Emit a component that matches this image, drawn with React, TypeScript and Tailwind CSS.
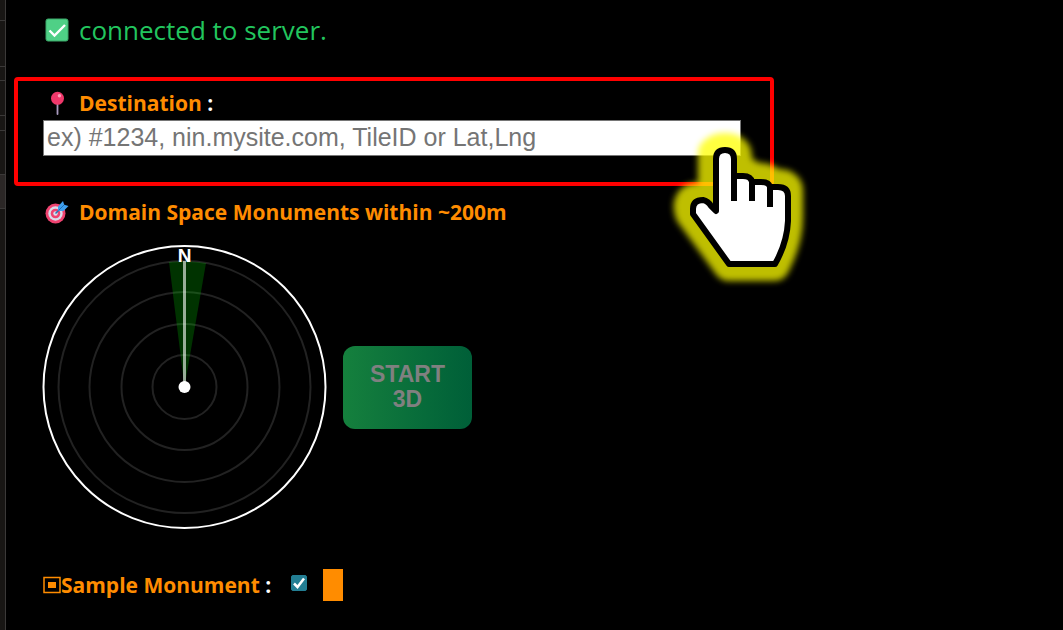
import { useState } from "react";

const railSections = [
  { height: "h-[21px]", tone: "bg-[#181614]" },
  { height: "h-[46px]", tone: "bg-[#181614]" },
  { height: "h-[14px]", tone: "bg-[#181614]" },
  { height: "h-[35px]", tone: "bg-[#181614]" },
  { height: "h-[15px]", tone: "bg-[#181614]" },
  { height: "h-[44px]", tone: "bg-[#181614]" },
  { height: "h-[34px]", tone: "bg-[#2b2726]" },
];

const ringRadii = [32, 63, 95, 126];

function CheckIcon() {
  return (
    <svg viewBox="0 0 24 24" className="size-6 shrink-0" aria-hidden="true">
      <rect x="1" y="1" width="22" height="22" rx="2" fill="#4fd086" stroke="#3aa869" />
      <path d="M4.5 12.5l5 5L20 7" fill="none" stroke="#fff" strokeWidth="2.4" />
    </svg>
  );
}

function PinIcon() {
  return (
    <svg viewBox="0 0 24 24" className="size-6 shrink-0" aria-hidden="true">
      <path d="M12.5 12v11" stroke="#a99abf" strokeWidth="1.8" strokeLinecap="round" />
      <circle cx="12.5" cy="7.3" r="6.5" fill="#f0386b" />
      <circle cx="14.4" cy="4.8" r="1.7" fill="#ff9dbb" />
    </svg>
  );
}

function TargetIcon() {
  return (
    <svg viewBox="0 0 24 24" className="size-6 shrink-0" aria-hidden="true">
      <circle cx="10.5" cy="13.5" r="10" fill="#ef4370" />
      <circle cx="10.5" cy="13.5" r="7.2" fill="#d9dcea" />
      <circle cx="10.5" cy="13.5" r="4.8" fill="#ef4370" />
      <circle cx="10.5" cy="13.5" r="2.2" fill="#d9dcea" />
      <path d="M10.5 13.5l7-7" stroke="#2277b8" strokeWidth="1.5" />
      <path d="M13 11V6.5L18 1l1.2 3.8L23.5 6 18.5 11z" fill="#3f9fee" />
      <path d="M13.5 10.5L19 5" stroke="#1d6fb5" strokeWidth="1" />
    </svg>
  );
}

function HandPointer() {
  const outline =
    "M54 83V146L52 139Q44 129 35 129Q27 132 31 143L69 195H114Q127 170 127 147V121Q127 115 118 115H111Q109 110 101 109H92Q90 104 83 104H76V87Q76 79 65 79Q54 79 54 87Z";
  return (
    <svg
      viewBox="0 50 160 170"
      className="pointer-events-none absolute -right-[50px] -bottom-[108px] z-10 h-[170px] w-[160px]"
      aria-hidden="true"
    >
      <defs>
        <filter id="halo" x="-30%" y="-30%" width="160%" height="160%">
          <feGaussianBlur stdDeviation="3" />
        </filter>
      </defs>
      <path
        d={outline}
        fill="#ff0"
        stroke="#ff0"
        strokeWidth="32"
        strokeLinejoin="round"
        opacity="0.75"
        filter="url(#halo)"
      />
      <path
        d="M56 89Q56 80 65 80Q74 80 74 89V106H83Q91 106 92 112H101Q109 112 110 117H118Q128 117 128 126V151Q127 173 115 194H69L33 144V139Q33 130 43 130Q48 131 51 136L56 141Z"
        fill="#fff"
        stroke="#000"
        strokeWidth="6"
        strokeLinejoin="round"
      />
      <path d="M74 104V131M92 112V131M110 117V137" stroke="#000" strokeWidth="6" />
    </svg>
  );
}

function Radar() {
  return (
    <svg
      viewBox="0 0 284 284"
      className="size-[284px] shrink-0 overflow-visible"
      role="img"
      aria-label="Radar facing north"
    >
      {ringRadii.map((r) => (
        <circle key={r} cx="141.5" cy="142" r={r} fill="none" stroke="#222" strokeWidth="2" />
      ))}
      <path d="M141.5 142L126 17Q144 15 163 18Z" fill="#00ff00" opacity="0.2" />
      <path d="M141.5 142V16" stroke="#fff" strokeWidth="3" opacity="0.6" />
      <circle cx="141.5" cy="142" r="141" fill="none" stroke="#fff" strokeWidth="2" />
      <circle cx="141.5" cy="142" r="6" fill="#fff" />
      <text
        x="141.5"
        y="17"
        textAnchor="middle"
        className="fill-white font-['Liberation_Sans',sans-serif] text-[19px] font-bold"
      >
        N
      </text>
    </svg>
  );
}

export default function App() {
  const [destination, setDestination] = useState("");
  const [showSample, setShowSample] = useState(true);

  return (
    <div className="flex min-h-screen bg-black font-['Open_Sans','Noto_Sans',sans-serif] text-white">
      <aside className="w-[6px] shrink-0 border-r border-[#3b3938] bg-[#181614]">
        {railSections.map((section, index) => (
          <div key={index} className={`${section.height} ${section.tone} border-b border-[#3b3938]`} />
        ))}
      </aside>

      <main className="min-w-0 flex-1 px-2 pt-3">
        <p className="flex items-center gap-2.5 pl-[31px] text-[26px] leading-9 text-[#22c55e]">
          <CheckIcon />
          connected to server.
        </p>

        <section className="relative mt-[29px] h-[109px] w-full max-w-[760px] rounded-sm border-4 border-[#f00] pt-2 pr-[29px] pl-[25px]">
          <label
            htmlFor="destination"
            className="mb-[3px] flex items-center gap-2.5 pl-0.5 text-[21px] leading-7 font-bold"
          >
            <PinIcon />
            <span>
              <span className="text-[#ff8c00]">Destination</span> :
            </span>
          </label>
          <input
            id="destination"
            type="text"
            value={destination}
            onChange={(event) => setDestination(event.target.value)}
            placeholder="ex) #1234, nin.mysite.com, TileID or Lat,Lng"
            className="h-9 w-full border border-[#767676] bg-white px-[3px] font-['Liberation_Sans',sans-serif] text-[25px] text-black placeholder:text-[#757575]"
          />
          <HandPointer />
        </section>

        <div className="pl-[29px]">
          <h2 className="mt-[11px] flex items-center gap-2.5 pl-0.5 text-[21px] leading-[30px] font-bold text-[#ff8c00]">
            <TargetIcon />
            Domain Space Monuments within ~200m
          </h2>

          <div className="mt-[18px] flex items-center gap-4">
            <Radar />
            <button
              type="button"
              disabled
              className="h-[83px] w-[129px] rounded-xl bg-linear-to-r from-[#15803d] to-[#005f38] px-5 font-['Liberation_Sans',sans-serif] text-[23px] leading-[25px] font-bold text-[#808080]"
            >
              START 3D
            </button>
          </div>

          <div className="mt-10 flex items-center text-[21px] leading-8 font-bold">
            <label htmlFor="sample" className="flex items-center">
              <svg viewBox="0 0 18 18" className="size-[18px] text-[#ff8c00]" aria-hidden="true">
                <path d="M1 1.5h16v15H1z" fill="none" stroke="currentColor" strokeWidth="1.5" />
                <path d="M5 6h8v6H5z" fill="currentColor" />
              </svg>
              <span>
                <span className="text-[#ff8c00]">Sample Monument</span> :
              </span>
            </label>
            <span className="relative mb-1 ml-5 size-4">
              <input
                id="sample"
                type="checkbox"
                checked={showSample}
                onChange={(event) => setShowSample(event.target.checked)}
                className="peer block size-4 appearance-none rounded-[2px] border border-[#237e93] checked:bg-[#237e93]"
              />
              <svg
                viewBox="0 0 16 16"
                className="pointer-events-none absolute inset-0 hidden peer-checked:block"
                aria-hidden="true"
              >
                <path d="M3 8.5l3.5 3.5L13 3.5" fill="none" stroke="#fff" strokeWidth="2.5" />
              </svg>
            </span>
            <span className="ml-4 h-8 w-5 bg-[#ff8c00]" />
          </div>
        </div>
      </main>
    </div>
  );
}
